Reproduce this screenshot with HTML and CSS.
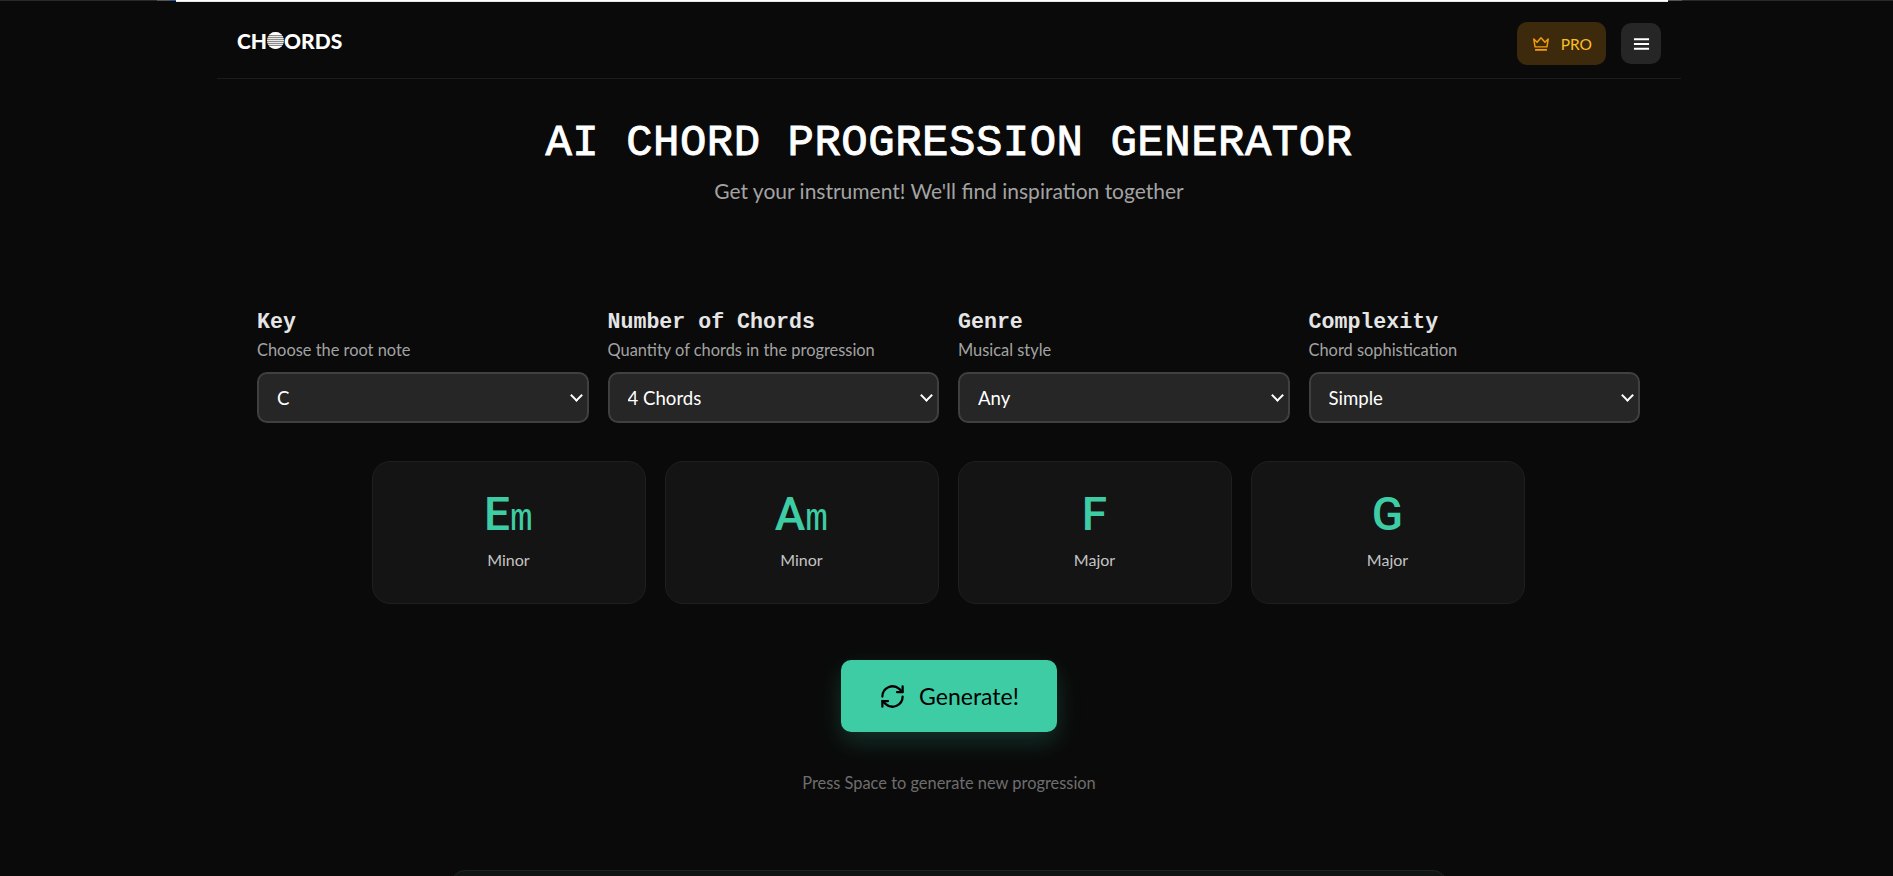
FILE: index.html
```html
<!DOCTYPE html>
<html lang="en">
<head>
    <meta charset="UTF-8">
    <meta name="viewport" content="width=device-width, initial-scale=1.0">
    <title>AI Chord Progression Generator</title>
    <link rel="stylesheet" href="styles.css">
</head>
<body>
    <div class="top-line"></div>
    <div class="container">
        <header class="header">
            <a class="logo" href="#">CH<svg class="logo-disc" viewBox="0 0 17 17" width="17" height="17">
                <defs>
                    <clipPath id="disc"><circle cx="8.5" cy="8.5" r="8.5"/></clipPath>
                </defs>
                <g clip-path="url(#disc)">
                    <rect width="17" height="17" fill="#8a8a8a"/>
                    <rect x="0" y="0" width="17" height="3" fill="#fff"/>
                    <rect x="0" y="4" width="17" height="1" fill="#e8e8e8"/>
                    <rect x="0" y="6" width="17" height="1" fill="#e8e8e8"/>
                    <rect x="0" y="8" width="17" height="1" fill="#e8e8e8"/>
                    <rect x="0" y="10" width="17" height="1" fill="#e8e8e8"/>
                    <rect x="0" y="12" width="17" height="1" fill="#e8e8e8"/>
                    <rect x="0" y="14" width="17" height="3" fill="#fff"/>
                </g>
            </svg>ORDS</a>
            <div class="header-actions">
                <a class="pro-btn" href="#">
                    <svg viewBox="0 0 20 20" width="18" height="18" fill="none" stroke="#f59e0b" stroke-width="1.6" stroke-linejoin="round">
                        <path d="M2 4.5l3.6 3.6L10 3l4.4 5.1L18 4.5l-1.4 8.7H3.4z"/>
                        <path d="M3.4 16.5h13.2" stroke-width="2"/>
                    </svg>
                    PRO
                </a>
                <button class="menu-btn" aria-label="Menu">
                    <svg viewBox="0 0 18 14" width="17" height="14" fill="none" stroke="#fff" stroke-width="2">
                        <path d="M1 2h16M1 7h16M1 12h16"/>
                    </svg>
                </button>
            </div>
        </header>

        <section class="hero">
            <h1>AI CHORD PROGRESSION GENERATOR</h1>
            <p>Get your instrument! We'll find inspiration together</p>
        </section>

        <section class="controls">
            <div class="control">
                <label for="key">Key</label>
                <span class="hint">Choose the root note</span>
                <div class="select-wrap">
                    <select id="key">
                        <option>C</option>
                        <option>D</option>
                        <option>E</option>
                    </select>
                </div>
            </div>
            <div class="control">
                <label for="count">Number of Chords</label>
                <span class="hint">Quantity of chords in the progression</span>
                <div class="select-wrap">
                    <select id="count">
                        <option>4 Chords</option>
                        <option>6 Chords</option>
                    </select>
                </div>
            </div>
            <div class="control">
                <label for="genre">Genre</label>
                <span class="hint">Musical style</span>
                <div class="select-wrap">
                    <select id="genre">
                        <option>Any</option>
                        <option>Pop</option>
                    </select>
                </div>
            </div>
            <div class="control">
                <label for="complexity">Complexity</label>
                <span class="hint">Chord sophistication</span>
                <div class="select-wrap">
                    <select id="complexity">
                        <option>Simple</option>
                        <option>Complex</option>
                    </select>
                </div>
            </div>
        </section>

        <section class="chords">
            <div class="chord-card">
                <div class="chord-name">E<small>m</small></div>
                <div class="chord-type">Minor</div>
            </div>
            <div class="chord-card">
                <div class="chord-name">A<small>m</small></div>
                <div class="chord-type">Minor</div>
            </div>
            <div class="chord-card">
                <div class="chord-name">F</div>
                <div class="chord-type">Major</div>
            </div>
            <div class="chord-card">
                <div class="chord-name">G</div>
                <div class="chord-type">Major</div>
            </div>
        </section>

        <div class="generate">
            <button class="generate-btn">
                <svg viewBox="0 0 24 24" width="27" height="27" fill="none" stroke="#000" stroke-width="2" stroke-linecap="round" stroke-linejoin="round">
                    <path d="M21 3v5h-5"/>
                    <path d="M3 12a9 9 0 0 1 15-6.7L21 8"/>
                    <path d="M21 12a9 9 0 0 1-15 6.7L3 16"/>
                    <path d="M3 21v-5h5"/>
                </svg>
                Generate!
            </button>
            <p class="generate-hint">Press Space to generate new progression</p>
        </div>

        <div class="next-panel"></div>
    </div>
</body>
</html>
```

FILE: styles.css
```css
* {
    box-sizing: border-box;
}

html, body {
    height: 100%;
    overflow: hidden;
}

body {
    margin: 0;
    background-color: #0a0a0a;
    color: #fff;
    font-family: "Lato", "Noto Sans", sans-serif;
}

/* strip at the very top: dark row, then the white bar below it */
.top-line {
    height: 2px;
    background:
        linear-gradient(to right, #2a2a2a 157px, #555 157px, #555 170px, #1a56a0 170px, #1a56a0 176px, #fff 176px, #fff 1668px, #555 1668px, #555 1682px, #2a2a2a 1682px) 0 0 / 100% 1px no-repeat,
        linear-gradient(to right, transparent 176px, #e8e8e8 176px, #e8e8e8 1668px, transparent 1668px) 0 1px / 100% 1px no-repeat;
}

.container {
    width: 1464px;
    margin-left: 217px;
}

.header {
    display: flex;
    justify-content: space-between;
    align-items: center;
    height: 77px;
    padding: 7px 20px 0;
    border-bottom: 1px solid #1c1c1c;
}

.logo {
    display: flex;
    align-items: center;
    margin-top: -6px;
    font-size: 21px;
    font-weight: 900;
    color: #fff;
    text-decoration: none;
}

.header-actions {
    display: flex;
    align-items: center;
    gap: 15px;
}

.pro-btn {
    display: flex;
    align-items: center;
    gap: 11px;
    height: 43px;
    padding: 0 14px 0 15px;
    border-radius: 10px;
    background-color: #3d2a0c;
    color: #fbbf24;
    font-size: 15.5px;
    text-decoration: none;
}

.menu-btn {
    display: flex;
    align-items: center;
    justify-content: center;
    width: 40px;
    height: 41px;
    padding: 0;
    border: none;
    border-radius: 10px;
    background-color: #262626;
}

.hero {
    padding-top: 39px;
    text-align: center;
}

.hero h1 {
    margin: 0;
    font-family: "Liberation Mono", monospace;
    font-size: 44px;
    line-height: 50px;
    font-weight: 400;
    letter-spacing: 0.5px;
    -webkit-text-stroke: 0.9px #fff;
}

.hero p {
    margin: 9px 0 0;
    font-size: 21px;
    line-height: 28px;
    color: #a3a3a3;
}

.controls {
    display: grid;
    grid-template-columns: repeat(4, 1fr);
    gap: 19px;
    width: 1383px;
    margin: 103px 0 0 40px;
}

.control {
    display: flex;
    flex-direction: column;
}

.control label {
    font-family: "Liberation Mono", monospace;
    font-size: 21.6px;
    line-height: 28px;
    font-weight: 700;
    color: #e5e5e5;
}

.hint {
    margin-top: 3px;
    font-size: 16.4px;
    line-height: 22px;
    color: #a3a3a3;
}

.select-wrap {
    position: relative;
    margin-top: 11px;
}

.select-wrap::after {
    content: "";
    position: absolute;
    top: 19px;
    right: 8px;
    width: 7px;
    height: 7px;
    border-right: 2px solid #fff;
    border-bottom: 2px solid #fff;
    transform: rotate(45deg);
    pointer-events: none;
}

.select-wrap select {
    width: 100%;
    height: 51px;
    padding: 0 18px;
    border: 2px solid #404040;
    border-radius: 10px;
    background-color: #262626;
    color: #fff;
    font-family: inherit;
    font-size: 18.6px;
    appearance: none;
}

.chords {
    display: flex;
    justify-content: center;
    gap: 19px;
    margin-top: 38px;
    padding-right: 2px;
}

.chord-card {
    width: 274px;
    height: 143px;
    padding-top: 27px;
    border: 1px solid #1f1f1f;
    border-radius: 18px;
    background-color: #141414;
    text-align: center;
}

.chord-name {
    font-family: "Roboto", sans-serif;
    font-size: 46px;
    line-height: 50px;
    font-weight: 500;
    color: #3ecca5;
}

.chord-name small {
    font-family: "Liberation Mono", monospace;
    font-size: 38px;
    line-height: 0;
    font-weight: 400;
}

.chord-type {
    margin-top: 9px;
    font-size: 16px;
    line-height: 24px;
    color: #c4c4c4;
}

.generate {
    margin-top: 56px;
    text-align: center;
}

.generate-btn {
    display: inline-flex;
    align-items: center;
    gap: 13px;
    height: 72px;
    padding: 0 38.5px;
    border: none;
    border-radius: 10px;
    background-color: #3ecca5;
    color: #000;
    font-family: inherit;
    font-size: 23px;
    box-shadow: 0 10px 24px rgba(62, 204, 165, 0.2);
}

.generate-hint {
    margin: 39px 0 0;
    font-size: 16.4px;
    line-height: 24px;
    color: #6e6e6e;
}

.next-panel {
    width: 996px;
    height: 40px;
    margin: 75px auto 0;
    border: 1px solid #1c2422;
    border-radius: 14px;
    background-color: #101412;
}
```
